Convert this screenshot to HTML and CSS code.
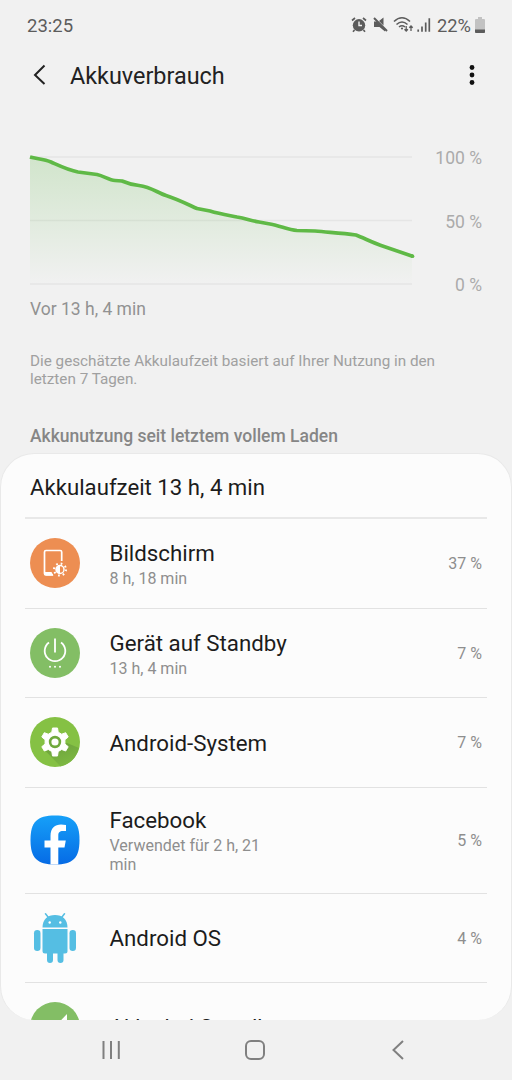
FILE: index.html
```html
<!DOCTYPE html>
<html lang="de">
<head>
  <meta charset="utf-8">
  <title>Akkuverbrauch</title>
  <link rel="stylesheet" href="styles.css">
</head>
<body>
  <div class="phone">
    <div class="status">
      <span class="time">23:25</span>
      <svg class="status-icons" width="82" height="20" viewBox="350 15 82 20">
        <!-- alarm -->
        <circle cx="359" cy="25.300" r="6.200" fill="#5c5c5c"/>
        <path d="M359 21.500v4h3" fill="none" stroke="#f1f1f1" stroke-width="1.400"/>
        <path d="M352 20.500l3-2.500M366 20.500l-3-2.500M354.500 30l-1.500 1.700M363.500 30l1.500 1.700" stroke="#5c5c5c" stroke-width="1.700"/>
        <!-- mute -->
        <path d="M374 21.500h3l8 8v2l-5.500-4.500H374zM379 21l4.500-3.500v8z" fill="#5c5c5c"/>
        <path d="M374 18l13 13" stroke="#5c5c5c" stroke-width="1.900"/>
        <!-- wifi -->
        <g fill="none" stroke="#5c5c5c" stroke-width="1.600">
          <path d="M394 21.500q8-7.500 16 0M396.500 24.500q5.500-5 11 0M399 27q3-2.500 6 0"/>
          <path d="M406.200 26v5M404.500 29.200l1.700 1.800 1.700-1.800M411 31v-5M409.300 27.800l1.700-1.800 1.700 1.800" stroke-width="1.300"/>
        </g>
        <circle cx="402" cy="28.500" r="1.100" fill="#5c5c5c"/>
        <!-- signal -->
        <path d="M418.200 29.500v2.300M422 26.500v5.300M425.700 22.500v9.300M429.300 18.200v13.600" stroke="#5c5c5c" stroke-width="1.700"/>
      </svg>
      <span class="level">22%</span>
      <svg class="battery" width="10" height="16" viewBox="0 0 10 16">
        <path d="M3 0h4v2h2q1 0 1 1v12q0 1-1 1H1q-1 0-1-1V3q0-1 1-1h2z" fill="#c2c2c2"/>
        <path d="M0 12.500h10V15q0 1-1 1H1q-1 0-1-1z" fill="#5c5c5c"/>
      </svg>
    </div>

    <div class="header">
      <svg class="back" width="14" height="22" viewBox="0 0 14 22"><path d="M12.500 1.500L3 11l9.500 9" fill="none" stroke="#222" stroke-width="2"/></svg>
      <h1>Akkuverbrauch</h1>
      <svg class="more" width="6" height="22" viewBox="0 0 6 22" fill="#111"><circle cx="3" cy="3.500" r="2.400"/><circle cx="3" cy="11" r="2.400"/><circle cx="3" cy="18.500" r="2.400"/></svg>
    </div>

    <div class="graph">
      <svg width="388" height="134" viewBox="28 152 388 134">
        <defs>
          <linearGradient id="fade" x1="0" y1="157" x2="0" y2="284" gradientUnits="userSpaceOnUse">
            <stop offset="0" stop-color="#5fb946" stop-opacity=".22"/>
            <stop offset="1" stop-color="#5fb946" stop-opacity="0"/>
          </linearGradient>
        </defs>
        <path d="M30 157H412M30 220.500H412M30 284H412" stroke="#e5e5e5" stroke-width="1.500"/>
        <path d="M30 157C37 159 44 159 51 162C60 166 68 170 78 172L97 174.500C104 176 109 180 115 180.500L122 181C129 184 133 185 139 185.500C151 187 158 193 166 195.500C177 199 187 204 197 208.500L210 211C220 214 227 215 237 217C246 218.500 252 221 259 222L270 224C281 226 288 230 297 230.500L315 231C330 232.500 342 233 356 235C364 238 373 243 384 246.500L412 256V284H30z" fill="url(#fade)"/>
        <path d="M30 157C37 159 44 159 51 162C60 166 68 170 78 172L97 174.500C104 176 109 180 115 180.500L122 181C129 184 133 185 139 185.500C151 187 158 193 166 195.500C177 199 187 204 197 208.500L210 211C220 214 227 215 237 217C246 218.500 252 221 259 222L270 224C281 226 288 230 297 230.500L315 231C330 232.500 342 233 356 235C364 238 373 243 384 246.500L412.500 256.200" fill="none" stroke="#5fb946" stroke-width="3.700" stroke-linejoin="round"/>
        <circle cx="412.500" cy="256.200" r="1.850" fill="#5fb946"/>
      </svg>
      <div class="scale"><span>100 %</span><span>50 %</span><span>0 %</span></div>
    </div>
    <p class="since">Vor 13 h, 4 min</p>
    <p class="hint">Die geschätzte Akkulaufzeit basiert auf Ihrer Nutzung in den letzten 7 Tagen.</p>
    <h2>Akkunutzung seit letztem vollem Laden</h2>

    <div class="card">
      <div class="runtime">Akkulaufzeit 13 h, 4 min</div>

      <div class="row">
        <svg class="icon" viewBox="0 0 50 50">
          <circle cx="25" cy="25" r="25" fill="#ed8e52"/>
          <path d="M31.700 23V14q0-1.500-1.500-1.500H16q-1.500 0-1.500 1.500v21.500q0 1.500 1.500 1.500h7" fill="none" stroke="#fff" stroke-width="1.700"/>
          <path d="M14.500 34h7l2 3.500h-8z" fill="#fff"/>
          <circle cx="30" cy="31.500" r="6" fill="none" stroke="#fff" stroke-width="2" stroke-dasharray="1.700 3.012"/>
          <circle cx="30" cy="31.500" r="4" fill="#ed8e52" stroke="#fff" stroke-width="1.500"/>
          <path d="M30 27.500a4 4 0 0 0 0 8z" fill="#fff"/>
        </svg>
        <div class="text"><div class="name">Bildschirm</div><div class="used">8 h, 18 min</div></div>
        <div class="percent">37 %</div>
      </div>

      <div class="row">
        <svg class="icon" viewBox="0 0 50 50">
          <circle cx="25" cy="25" r="25" fill="#83be65"/>
          <path d="M25 10.500v14M19 14.500a10.300 10.300 0 1 0 12 0" fill="none" stroke="#fff" stroke-width="1.800"/>
          <g fill="#fff"><circle cx="20" cy="38.700" r="1"/><circle cx="25" cy="38.700" r="1"/><circle cx="30" cy="38.700" r="1"/></g>
        </svg>
        <div class="text"><div class="name">Gerät auf Standby</div><div class="used">13 h, 4 min</div></div>
        <div class="percent">7 %</div>
      </div>

      <div class="row">
        <svg class="icon" viewBox="0 0 50 50">
          <defs><linearGradient id="shade" x1="0.300" y1="0.200" x2="0.700" y2="0.900"><stop offset="0" stop-color="#6fa63d"/><stop offset="1" stop-color="#7db842"/></linearGradient></defs>
          <circle cx="25" cy="25" r="25" fill="#85c144"/>
          <path d="M15 33.500L30.500 49.400Q45 46 49 31L37 26z" fill="url(#shade)"/>
          <path d="M22.500 11h5l.7 4.200 3.500 2 4-1.500 2.500 4.300-3.300 2.700v4.300l3.300 2.700-2.500 4.300-4-1.500-3.500 2-.7 4.500h-5l-.7-4.500-3.500-2-4 1.500-2.500-4.300 3.300-2.700v-4.300l-3.300-2.700 2.500-4.300 4 1.500 3.500-2z" fill="#fff" stroke="#fff" stroke-linejoin="round"/>
          <circle cx="25" cy="25" r="4.900" fill="#fff" stroke="#70a93d" stroke-width="2.600"/>
        </svg>
        <div class="text"><div class="name">Android-System</div></div>
        <div class="percent">7 %</div>
      </div>

      <div class="row tall">
        <svg class="icon" viewBox="0 0 50 50">
          <defs><linearGradient id="fb" x1="0" y1="0" x2="0" y2="1"><stop offset="0" stop-color="#16a0f8"/><stop offset="1" stop-color="#066be5"/></linearGradient></defs>
          <path d="M25 .5C43 .5 49.500 7 49.500 25S43 49.500 25 49.500.5 43 .5 25 7 .5 25 .5z" fill="url(#fb)"/>
          <path d="M20.500 49.500V32.500h-6v-7h6v-4.500C20.500 13 25 9.500 31 9.500q2.500 0 5 .5v6h-3c-3.500 0-4.700 1.500-4.700 4.500v5h7.500l-1.300 7h-6.200v17z" fill="#fff"/>
        </svg>
        <div class="text"><div class="name">Facebook</div><div class="used">Verwendet für 2 h, 21 min</div></div>
        <div class="percent">5 %</div>
      </div>

      <div class="row">
        <svg class="icon" viewBox="0 0 50 50" fill="#55bee3">
          <path d="M12.500 14.500C12.500 6.500 17.500 2 25 2s12.500 4.500 12.500 12.500z"/>
          <path d="M15.500.8l3.500 4.500M34.500.8l-3.500 4.500" stroke="#55bee3" stroke-width="1.500" stroke-linecap="round"/>
          <circle cx="19.700" cy="9.500" r="1.200" fill="#fff"/><circle cx="30.300" cy="9.500" r="1.200" fill="#fff"/>
          <path d="M12.500 16h25v22q0 2.500-2.500 2.500H15q-2.500 0-2.500-2.500z"/>
          <rect x="4" y="17" width="6.500" height="21" rx="3.200"/><rect x="39.500" y="17" width="6.500" height="21" rx="3.200"/>
          <path d="M17 39h6v8a3 3 0 0 1-6 0zM27.500 39h6v8a3 3 0 0 1-6 0z"/>
        </svg>
        <div class="text"><div class="name">Android OS</div></div>
        <div class="percent">4 %</div>
      </div>

      <div class="row last">
        <svg class="icon" viewBox="0 0 50 50"><circle cx="25" cy="25" r="25" fill="#83be65"/><path d="M37 12v25H13z" fill="#fff"/></svg>
        <div class="text"><div class="name">Akku bei Standby</div></div>
      </div>
    </div>

    <div class="nav">
      <svg width="20" height="20" viewBox="0 0 20 20"><path d="M2.500 1v18M10 1v18M17.800 1v18" stroke="#808080" stroke-width="2"/></svg>
      <svg width="22" height="22" viewBox="0 0 22 22"><rect x="2" y="2" width="18" height="18" rx="5" fill="none" stroke="#808080" stroke-width="2"/></svg>
      <svg width="14" height="20" viewBox="0 0 14 20"><path d="M12 1L2.500 10l9.500 9" fill="none" stroke="#808080" stroke-width="2"/></svg>
    </div>
  </div>
</body>
</html>
```
FILE: styles.css
```css
* {
  box-sizing: border-box;
}

body {
  margin: 0;
  background: #f1f1f1;
  font-family: Roboto, sans-serif;
}

h1, h2, p {
  margin: 0;
}

svg {
  display: block;
  flex: none;
}

.phone {
  width: 512px;
  height: 1080px;
  overflow: hidden;
  display: flex;
  flex-direction: column;
}

.status {
  height: 50px;
  padding: 2px 27px 0;
  display: flex;
  align-items: center;
  color: #5c5c5c;
  font-size: 18.5px;
}

.status-icons {
  margin: -2px 0 0 auto;
}

.level {
  margin: 0 4px 0 5px;
  font-size: 18.3px;
}

.battery {
  margin-top: -2px;
}

.header {
  height: 50px;
  padding: 0 37px 0 32px;
  display: flex;
  align-items: center;
}

.header h1 {
  margin: 2px 0 0 24px;
  font-size: 23.4px;
  font-weight: 400;
  color: #222;
}

.more {
  margin-left: auto;
}

.graph {
  margin-top: 52px;
  padding: 0 30px 0 28px;
  height: 134px;
  display: flex;
  justify-content: space-between;
}

.graph svg {
  margin-top: 1px;
}

.scale {
  height: 149px;
  margin-top: -4px;
  display: flex;
  flex-direction: column;
  justify-content: space-between;
  text-align: right;
  color: #ababab;
  font-size: 17.5px;
  line-height: 22px;
}

.since {
  margin: 13px 30px 0;
  color: #929292;
  font-size: 17.5px;
  line-height: 22px;
}

.hint {
  margin: 32px 60px 0 30px;
  color: #a0a0a0;
  font-size: 15.25px;
  line-height: 18px;
}

h2 {
  margin: 38px 30px 0;
  color: #868686;
  font-size: 17.5px;
  font-weight: 500;
  line-height: 20px;
}

.card {
  margin-top: 7px;
  height: 567px;
  flex: none;
  overflow: hidden;
  padding: 0 24px;
  background: #fcfcfc;
  border: 1px solid #e9e9e9;
  border-bottom: 0;
  border-radius: 34px;
}

.runtime {
  height: 65px;
  padding: 1px 5px 0;
  border-bottom: 2px solid #e8e8e8;
  font-size: 22.2px;
  line-height: 65px;
  color: #1c1c1c;
}

.row {
  height: 89.5px;
  padding: 0 5px 0 4.5px;
  display: flex;
  align-items: center;
  border-bottom: 1.5px solid #e2e2e2;
}

.row.tall {
  height: 106px;
}

.icon {
  width: 50px;
  height: 50px;
  margin-top: -1px;
}

.text {
  width: 160px;
  margin: 1px 0 0 30px;
}

.name {
  font-size: 22.3px;
  line-height: 27px;
  color: #1c1c1c;
  white-space: nowrap;
}

.used {
  font-size: 16px;
  line-height: 19px;
  padding-top: 2px;
  color: #8e8e8e;
}

.percent {
  margin-left: auto;
  font-size: 16px;
  color: #8e8e8e;
}

/* only the top of this row is visible above the navigation bar */
.last .text {
  margin-top: 0;
}

.nav {
  height: 60px;
  padding: 0 107px 0 101px;
  display: flex;
  align-items: center;
  justify-content: space-between;
}

.nav svg:nth-child(2) {
  margin-right: 3px;
}
```
